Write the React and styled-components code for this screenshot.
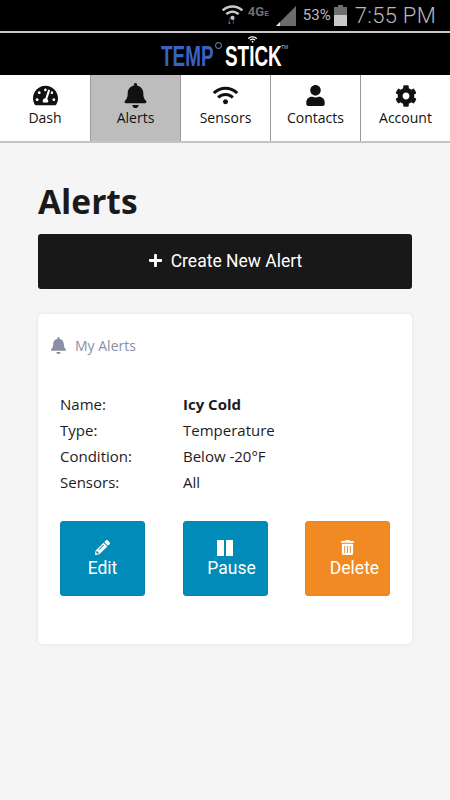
import React from "react";
import styled, { createGlobalStyle } from "styled-components";
import { FaBell, FaCog, FaPencilAlt, FaPlus, FaTachometerAlt, FaTrashAlt, FaUser, FaWifi } from "react-icons/fa";

const GlobalStyle = createGlobalStyle`
  html, body {
    margin: 0;
    padding: 0;
    background: #f5f5f5;
  }
  * {
    box-sizing: border-box;
  }
`;

const Page = styled.div`
  width: 450px;
  height: 800px;
  overflow: hidden;
  background: #f5f5f5;
  font-family: "Open Sans", sans-serif;
`;

const StatusBar = styled.div`
  height: 33px;
  background: #000;
  border-bottom: 2px solid #c9c9c9;
  display: flex;
  align-items: center;
  justify-content: flex-end;
  padding: 0 14px 1px 0;
  color: #b9b9b9;
  font-family: "Roboto", sans-serif;
`;

const StatusWifi = styled.span`
  position: relative;
  display: flex;
  width: 21px;
  height: 24px;
  margin: 0 5px 3px 0;
  color: #c8c8c8;
`;

const WifiArrows = styled.span`
  position: absolute;
  left: 5px;
  top: 14px;
  font-size: 10px;
  font-weight: 700;
  line-height: 10px;
  letter-spacing: -1px;
  color: #b0b0b0;
`;

const NetworkLabel = styled.span`
  font-size: 13px;
  font-weight: 700;
  color: #6f6f6f;
  margin: 0 4px 7px 0;
  width: 23px;
  white-space: nowrap;
`;

const NetworkSmall = styled.span`
  font-size: 8px;
`;

const Percent = styled.span`
  font-size: 15px;
  margin: 0 3px 0 7px;
`;

const Clock = styled.span`
  font-size: 22px;
  font-weight: 300;
  margin-left: 8px;
  letter-spacing: 0.3px;
`;

const LogoBar = styled.header`
  height: 42px;
  background: #000;
  display: flex;
  justify-content: center;
  align-items: center;
  padding-top: 3px;
`;

const Logo = styled.div`
  position: relative;
  display: flex;
  align-items: flex-start;
  font-family: "Liberation Sans", sans-serif;
  font-weight: 700;
  font-size: 30px;
  line-height: 30px;
  margin-left: -1px;
`;

const LogoWord = styled.span`
  display: inline-block;
  width: ${(p) => p.$width}px;
  white-space: nowrap;
  transform: scaleX(0.63);
  transform-origin: left center;
  color: ${(p) => p.$color};
`;

const LogoDegree = styled.span`
  width: 7px;
  height: 7px;
  border: 1px solid #7f93cf;
  border-radius: 50%;
  margin: 1px 3px 0 2px;
`;

const LogoMark = styled.span`
  font-size: 5px;
  line-height: 12px;
  color: #bbb;
  font-weight: 400;
`;

const LogoSignal = styled.span`
  position: absolute;
  left: 87px;
  top: -6px;
  display: flex;
  color: #fff;
`;

const Nav = styled.nav`
  height: 68px;
  background: #fff;
  border-bottom: 2px solid #c4c4c4;
  display: grid;
  grid-template-columns: 91px 90px 90px 90px 89px;
`;

const NavItem = styled.div`
  display: flex;
  flex-direction: column;
  align-items: center;
  padding-top: 8px;
  color: #111;
  font-size: 14px;
  line-height: 20px;
  background: ${(p) => (p.$active ? "#bdbdbd" : "transparent")};
  border-right: ${(p) => (p.$last ? "none" : "1px solid #9a9a9a")};
`;

const NavIcon = styled.span`
  height: 25px;
  display: flex;
  align-items: center;
  font-size: ${(p) => p.$size || 24}px;
`;

const Main = styled.main`
  padding: 36px 38px 0;
`;

const Title = styled.h1`
  margin: 0 0 11px;
  font-size: 33.5px;
  line-height: 44px;
  font-weight: 700;
  color: #1a1a1a;
`;

const CreateButton = styled.button`
  width: 100%;
  height: 55px;
  border: none;
  border-radius: 3px;
  background: #181818;
  color: #fff;
  display: flex;
  align-items: center;
  justify-content: center;
  gap: 8px;
  font-family: "Roboto", sans-serif;
  font-size: 17.5px;
  margin-bottom: 25px;
  padding: 0 0 2px;
`;

const Card = styled.section`
  height: 330px;
  background: #fff;
  border-radius: 5px;
  box-shadow: 0 0 4px rgba(0, 0, 0, 0.08);
  padding: 22px 22px 0 12px;
`;

const CardHeader = styled.div`
  display: flex;
  align-items: center;
  gap: 8px;
  color: #8a8fa6;
  font-size: 14px;
  line-height: 19px;
  height: 19px;
`;

const Details = styled.dl`
  margin: 36px 0 0 10px;
  display: grid;
  grid-template-columns: 123px 1fr;
  grid-auto-rows: 26px;
  align-items: center;
  font-size: 15px;
  color: #1c1c1c;
`;

const Term = styled.dt`
  margin: 0;
`;

const Value = styled.dd`
  margin: 0;
  font-weight: ${(p) => (p.$bold ? 700 : 400)};
`;

const Actions = styled.div`
  margin: 26px 0 0 10px;
  display: grid;
  grid-template-columns: repeat(3, 85px);
  justify-content: space-between;
`;

const ActionButton = styled.button`
  height: 75px;
  border: 1px solid ${(p) => (p.$danger ? "#e8861f" : "#0a80ae")};
  border-radius: 3px;
  background: ${(p) => (p.$danger ? "#f18a23" : "#008bb9")};
  color: #fff;
  display: flex;
  flex-direction: column;
  align-items: center;
  justify-content: flex-start;
  font-family: "Roboto", sans-serif;
  font-size: 17.5px;
  line-height: 22px;
  padding: 17px 0 0;
`;

const ActionIcon = styled.span`
  height: 17px;
  display: flex;
  align-items: center;
  font-size: 15px;
`;

const ActionLabel = styled.span`
  margin-left: ${(p) => p.$shift || 0}px;
  margin-top: 1px;
`;

const PauseBars = () => (
  <svg width="16" height="16" viewBox="0 0 16 16" fill="currentColor">
    <rect width="7" height="16" />
    <rect x="9" width="7" height="16" />
  </svg>
);

const navItems = [
  { label: "Dash", Icon: FaTachometerAlt, size: 25 },
  { label: "Alerts", Icon: FaBell, size: 25, active: true },
  { label: "Sensors", Icon: FaWifi, size: 25 },
  { label: "Contacts", Icon: FaUser, size: 21 },
  { label: "Account", Icon: FaCog, size: 22 },
];

const details = [
  ["Name:", "Icy Cold", true],
  ["Type:", "Temperature"],
  ["Condition:", "Below -20°F"],
  ["Sensors:", "All"],
];

const actions = [
  { label: "Edit", Icon: FaPencilAlt, labelShift: 0 },
  { label: "Pause", Icon: PauseBars, labelShift: 13 },
  { label: "Delete", Icon: FaTrashAlt, labelShift: 14, danger: true },
];

const App = () => {
  return (
    <Page>
      <GlobalStyle />
      <StatusBar>
        <StatusWifi>
          <FaWifi size={21} />
          <WifiArrows>↓↑</WifiArrows>
        </StatusWifi>
        <NetworkLabel>
          4G<NetworkSmall>E</NetworkSmall>
        </NetworkLabel>
        <svg width="21" height="21" viewBox="0 0 21 21">
          <path d="M21 1V21H1z" fill="#6b6b6b" />
          <path d="M5 17V21H1z" fill="#e0e0e0" />
        </svg>
        <Percent>53%</Percent>
        <svg width="13" height="21" viewBox="0 0 13 21">
          <path d="M4 0h5v2h4v8H0V2h4z" fill="#6f6f6f" />
          <rect y="10" width="13" height="11" fill="#c9c9c9" />
        </svg>
        <Clock>7:55 PM</Clock>
      </StatusBar>
      <LogoBar>
        <Logo>
          <LogoWord $width={52} $color="#3a62c4">TEMP</LogoWord>
          <LogoDegree />
          <LogoWord $width={56} $color="#fff">STICK</LogoWord>
          <LogoMark>TM</LogoMark>
          <LogoSignal>
            <FaWifi size={9} />
          </LogoSignal>
        </Logo>
      </LogoBar>
      <Nav>
        {navItems.map(({ label, Icon, size, active }, i) => (
          <NavItem key={label} $active={active} $last={i === navItems.length - 1}>
            <NavIcon $size={size}>
              <Icon />
            </NavIcon>
            {label}
          </NavItem>
        ))}
      </Nav>
      <Main>
        <Title>Alerts</Title>
        <CreateButton>
          <FaPlus size={15} />
          Create New Alert
        </CreateButton>
        <Card>
          <CardHeader>
            <FaBell size={17} />
            My Alerts
          </CardHeader>
          <Details>
            {details.map(([term, value, bold]) => (
              <React.Fragment key={term}>
                <Term>{term}</Term>
                <Value $bold={bold}>{value}</Value>
              </React.Fragment>
            ))}
          </Details>
          <Actions>
            {actions.map(({ label, Icon, labelShift, danger }) => (
              <ActionButton key={label} $danger={danger}>
                <ActionIcon>
                  <Icon />
                </ActionIcon>
                <ActionLabel $shift={labelShift}>{label}</ActionLabel>
              </ActionButton>
            ))}
          </Actions>
        </Card>
      </Main>
    </Page>
  );
};

export default App;
